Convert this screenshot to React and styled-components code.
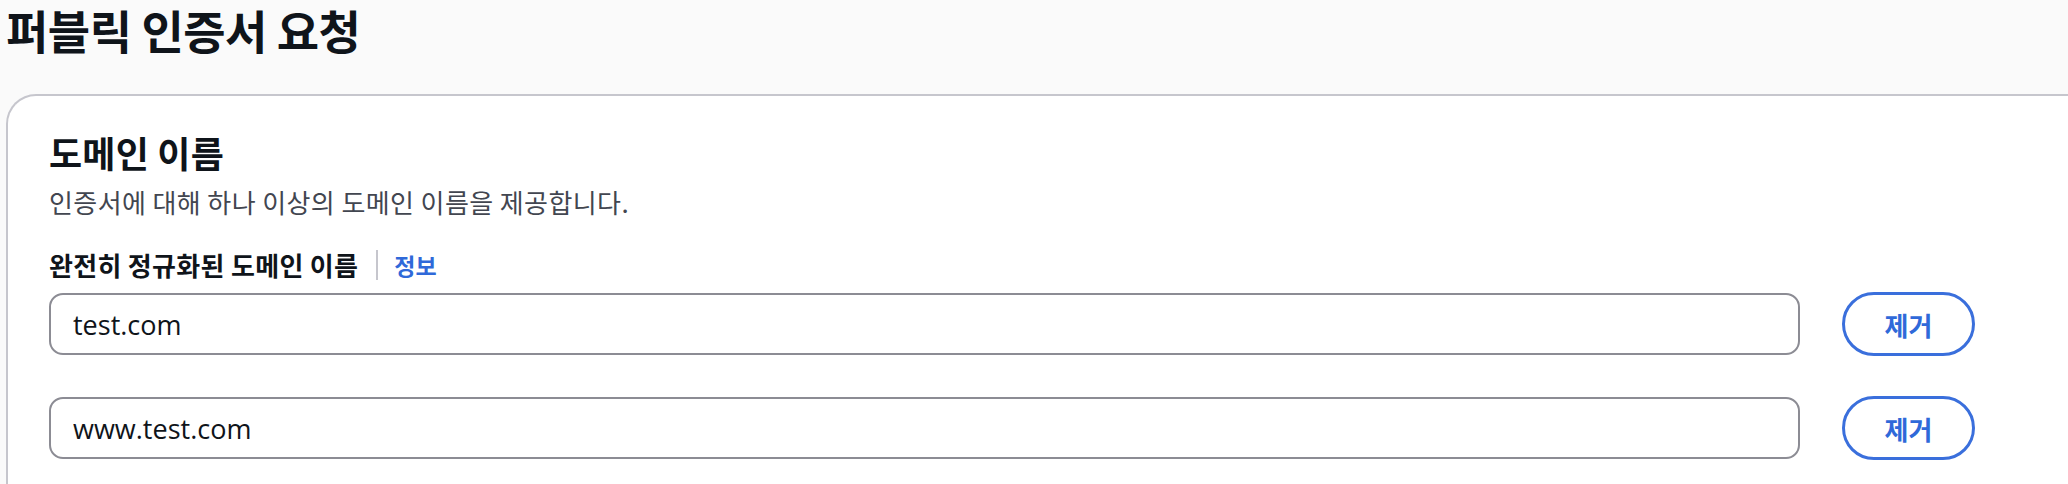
import React from "react";
import styled, { createGlobalStyle } from "styled-components";

const Global = createGlobalStyle`
  html, body { margin: 0; padding: 0; }
  body {
    background: #fafafa;
    overflow: hidden;
    font-family: "Open Sans", "Noto Sans CJK KR", sans-serif;
    color: #16191f;
  }
`;

const Page = styled.div`
  width: 2068px;
  height: 484px;
  overflow: hidden;
`;

const Header = styled.header`
  height: 94px;
  padding-left: 6px;
  box-sizing: border-box;
  display: flex;
  align-items: flex-start;
`;

const Title = styled.h1`
  margin: 0;
  padding-top: 0;
  font-family: "Noto Sans CJK KR", sans-serif;
  font-weight: 700;
  font-size: 46px;
  line-height: 58px;
  letter-spacing: -0.5px;
  color: #0f141a;
`;

const Card = styled.section`
  margin-left: 6px;
  width: 2100px;
  background: #ffffff;
  border: 2px solid #c6c6cd;
  border-right: none;
  border-bottom: none;
  border-top-left-radius: 30px;
  padding: 34px 0 40px 41px;
  box-sizing: border-box;
  min-height: 400px;
`;

const Heading = styled.h2`
  margin: 0;
  font-family: "Noto Sans CJK KR", sans-serif;
  font-weight: 700;
  font-size: 36px;
  line-height: 44px;
  letter-spacing: 0.2px;
  color: #0f141a;
`;

const Description = styled.p`
  margin: 11px 0 0;
  font-family: "Noto Sans CJK KR", sans-serif;
  font-size: 26px;
  line-height: 34px;
  color: #424650;
  letter-spacing: 0.4px;
`;

const LabelRow = styled.div`
  margin-top: 30px;
  display: flex;
  align-items: center;
  height: 32px;
`;

const Label = styled.span`
  font-family: "Noto Sans CJK KR", sans-serif;
  font-weight: 700;
  font-size: 26px;
  line-height: 32px;
  letter-spacing: 0.3px;
  color: #0f141a;
`;

const Divider = styled.span`
  width: 2px;
  height: 30px;
  background: #c6c6cd;
  margin: 0 16px 0 18px;
`;

const InfoLink = styled.a`
  font-family: "Noto Sans CJK KR", sans-serif;
  font-weight: 700;
  font-size: 23px;
  color: #2f69d9;
  text-decoration: none;
`;

const Rows = styled.div`
  margin-top: 11px;
  display: flex;
  flex-direction: column;
  gap: 40px;
`;

const Row = styled.div`
  display: grid;
  grid-template-columns: 1751px 133px;
  column-gap: 42px;
  align-items: center;
`;

const Input = styled.input`
  box-sizing: border-box;
  height: 62px;
  width: 100%;
  border: 2px solid #8c8c94;
  border-radius: 14px;
  padding: 0 0 0 22px;
  font-family: "Open Sans", "Noto Sans CJK KR", sans-serif;
  font-size: 27px;
  color: #0f141a;
  background: #fff;
  outline: none;
`;

const RemoveButton = styled.button`
  box-sizing: border-box;
  height: 64px;
  width: 133px;
  border: 3px solid #3a6fdc;
  border-radius: 32px;
  background: #fff;
  color: #2f69d9;
  font-family: "Noto Sans CJK KR", sans-serif;
  font-weight: 700;
  font-size: 26px;
  cursor: pointer;
`;

const domains = ["test.com", "www.test.com"];

export default function App() {
  return (
    <Page>
      <Global />
      <Header>
        <Title>퍼블릭 인증서 요청</Title>
      </Header>
      <Card>
        <Heading>도메인 이름</Heading>
        <Description>인증서에 대해 하나 이상의 도메인 이름을 제공합니다.</Description>
        <LabelRow>
          <Label>완전히 정규화된 도메인 이름</Label>
          <Divider />
          <InfoLink href="#">정보</InfoLink>
        </LabelRow>
        <Rows>
          {domains.map((d) => (
            <Row key={d}>
              <Input defaultValue={d} />
              <RemoveButton>제거</RemoveButton>
            </Row>
          ))}
        </Rows>
      </Card>
    </Page>
  );
}
